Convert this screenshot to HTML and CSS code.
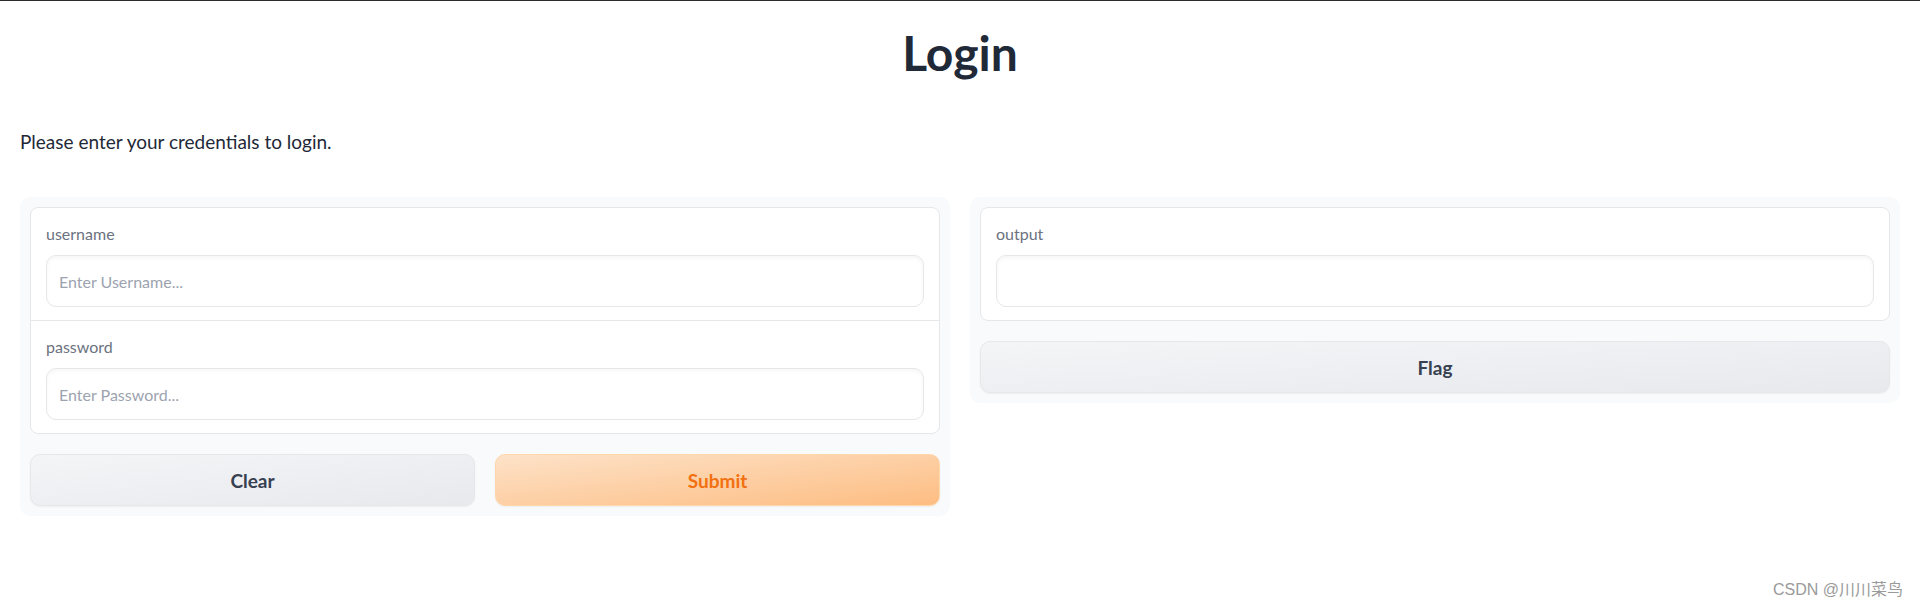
FILE: index.html
```html
<!DOCTYPE html>
<html lang="en">
<head>
<meta charset="utf-8">
<title>Login</title>
<link rel="stylesheet" href="styles.css">
</head>
<body>
<div class="app">
  <h1 class="title">Login</h1>
  <p class="desc">Please enter your credentials to login.</p>
  <div class="row">
    <div class="panel">
      <div class="block">
        <label class="field">
          <span class="label">username</span>
          <input class="input" type="text" placeholder="Enter Username...">
        </label>
        <label class="field">
          <span class="label">password</span>
          <input class="input" type="password" placeholder="Enter Password...">
        </label>
      </div>
      <div class="btn-row">
        <button class="btn secondary">Clear</button>
        <button class="btn primary">Submit</button>
      </div>
    </div>
    <div class="panel">
      <div class="block">
        <label class="field">
          <span class="label">output</span>
          <input class="input" type="text">
        </label>
      </div>
      <button class="btn secondary">Flag</button>
    </div>
  </div>
</div>
<div class="watermark">CSDN @川川菜鸟</div>
</body>
</html>
```
FILE: styles.css
```css
* { box-sizing: border-box; }
html, body { margin: 0; padding: 0; background: #ffffff; }
body {
  border-top: 1px solid #2b2b2b;
  font-family: Lato, "Noto Sans", sans-serif;
  color: #1f2937;
  height: 607px;
  overflow: hidden;
  position: relative;
}
.app { padding: 0 20px; }
.title {
  margin: 0;
  padding-top: 22px;
  text-align: center;
  font-size: 48px;
  line-height: 60px;
  font-weight: 700;
  color: #1f2937;
}
.desc {
  margin: 0;
  margin-top: 47px;
  font-size: 19px;
  line-height: 24px;
  color: #1f2937;
}
.row {
  margin-top: 43px;
  display: grid;
  grid-template-columns: 1fr 1fr;
  gap: 20px;
  align-items: start;
}
.panel {
  background: #f9fafb;
  border-radius: 10px;
  padding: 10px;
  display: flex;
  flex-direction: column;
  gap: 20px;
}
.block {
  background: #fff;
  border: 1px solid #e5e7eb;
  border-radius: 8px;
  display: flex;
  flex-direction: column;
}
.field {
  display: flex;
  flex-direction: column;
  padding: 15px 15px 13px;
}
.field + .field { border-top: 1px solid #e5e7eb; }
.label {
  font-size: 16px;
  line-height: 22px;
  color: #6b7280;
  margin-bottom: 10px;
}
.input {
  height: 52px;
  border: 1px solid #e5e7eb;
  border-radius: 10px;
  padding: 0 12px;
  font-family: Lato, "Noto Sans", sans-serif;
  font-size: 16px;
  color: #1f2937;
  background: #fff;
  box-shadow: inset 0 2px 4px rgba(0,0,0,0.04);
  outline: none;
}
.input::placeholder { color: #9ca3af; }
.btn-row {
  display: grid;
  grid-template-columns: 1fr 1fr;
  gap: 20px;
}
.btn {
  height: 52px;
  border-radius: 10px;
  font-family: Lato, "Noto Sans", sans-serif;
  font-size: 19px;
  font-weight: 700;
  box-shadow: 0 1px 2px rgba(0,0,0,0.05);
}
.btn.secondary {
  border: 1px solid #e5e7eb;
  background: linear-gradient(to bottom right, #f4f5f7, #e8e9ed);
  color: #374151;
}
.btn.primary {
  border: 1px solid #fed7aa;
  background: linear-gradient(to bottom right, #fde2c8, #fdbd82);
  color: #f2700f;
}
.watermark {
  position: absolute;
  right: 17px;
  bottom: 7px;
  font-family: "Liberation Sans", "Noto Sans CJK SC", sans-serif;
  font-size: 16px;
  line-height: 20px;
  color: #9a9a9a;
}
```
